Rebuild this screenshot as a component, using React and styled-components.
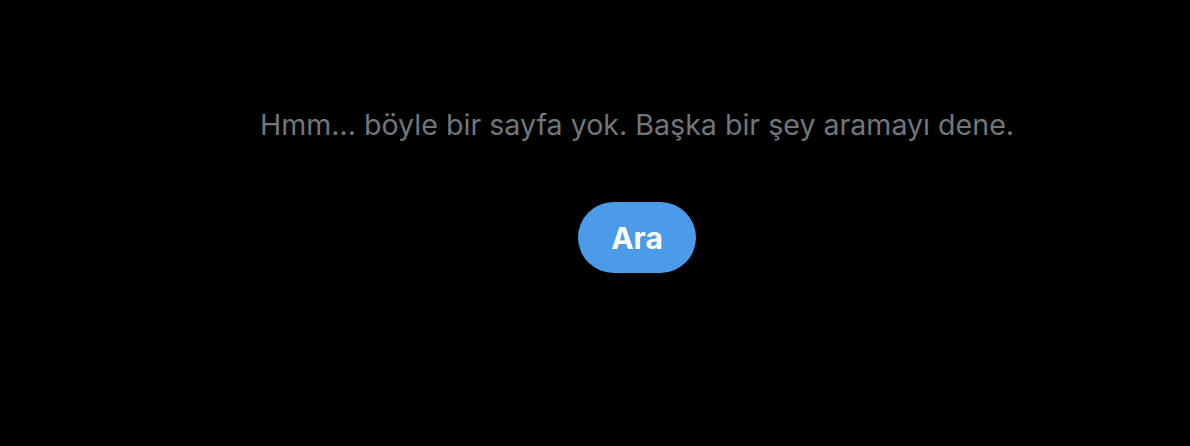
import React from 'react';
import styled, { createGlobalStyle } from 'styled-components';

const GlobalStyle = createGlobalStyle`
  html, body {
    margin: 0;
    padding: 0;
    background: #000000;
  }
  body {
    font-family: Inter, "Noto Sans", "Liberation Sans", sans-serif;
  }
`;

const Page = styled.main`
  width: 1190px;
  height: 446px;
  box-sizing: border-box;
  padding: 105px 0 0 84px;
  display: flex;
  flex-direction: column;
  align-items: center;
  background: #000000;
`;

const Message = styled.p`
  margin: 0;
  color: #71767b;
  font-size: 28.6px;
  line-height: 40px;
  font-weight: 400;
`;

const SearchButton = styled.button`
  margin-top: 57px;
  width: 118px;
  height: 71px;
  border: none;
  border-radius: 36px;
  background: #4c9be8;
  color: #ffffff;
  font-family: inherit;
  font-size: 30px;
  font-weight: 700;
  cursor: pointer;
`;

export default function App() {
  return (
    <>
      <GlobalStyle />
      <Page>
        <Message>Hmm... böyle bir sayfa yok. Başka bir şey aramayı dene.</Message>
        <SearchButton>Ara</SearchButton>
      </Page>
    </>
  );
}
